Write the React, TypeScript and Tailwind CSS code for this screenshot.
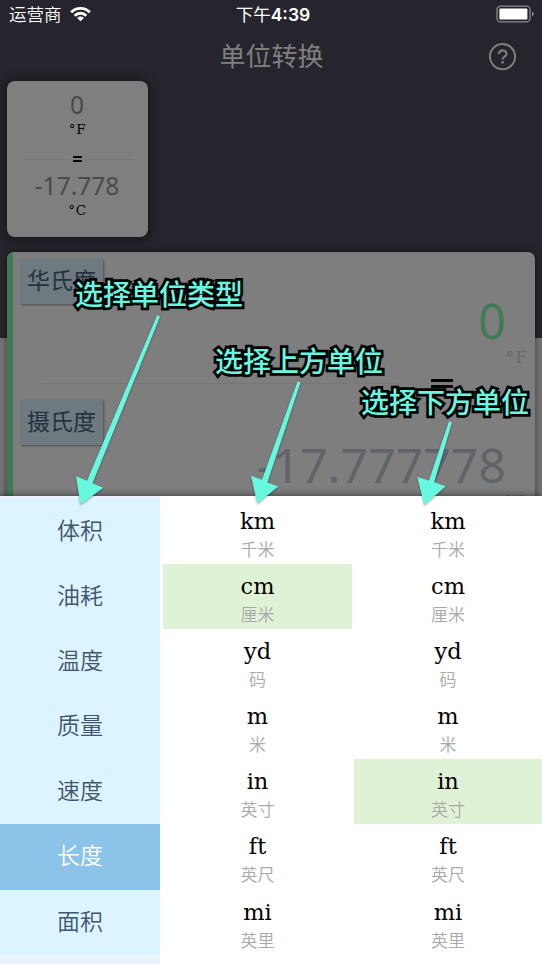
import React from "react";

const CJK = "font-['Noto_Sans_CJK_SC',sans-serif]";
const SLAB = "font-['DejaVu_Serif',serif]";
const DIGITS = "font-['Noto_Sans',sans-serif]";

const categories = ["体积", "油耗", "温度", "质量", "速度", "长度", "面积"];
const units = [
  ["km", "千米"],
  ["cm", "厘米"],
  ["yd", "码"],
  ["m", "米"],
  ["in", "英寸"],
  ["ft", "英尺"],
  ["mi", "英里"],
];

function StatusBar() {
  return (
    <div className="grid h-[30px] grid-cols-[1fr_auto_1fr] items-center pr-[7px] pl-[9px] text-white">
      <div className="flex items-center gap-[8px]">
        <span className={`${CJK} -mt-[2px] text-[17.5px] leading-[28px] font-[350]`}>运营商</span>
        <svg className="-mt-[2px]" width="21" height="16" viewBox="0 0 21 16" fill="none" stroke="white" strokeWidth="2.9">
          <path d="M1.2 6.2a13.2 13.2 0 0 1 18.6 0" />
          <path d="M4.7 9.7a8.2 8.2 0 0 1 11.6 0" />
          <path d="M10.5 15.2 7.2 11.9a4.7 4.7 0 0 1 6.6 0z" fill="white" stroke="none" />
        </svg>
      </div>
      <div className="-mt-[2px] flex items-center pl-[2px] leading-[28px] whitespace-nowrap">
        <span className={`${CJK} text-[17.5px] font-normal`}>下午</span>
        <span className="mt-px font-['Inter',sans-serif] text-[17.5px] font-semibold">4:39</span>
      </div>
      <svg className="-mt-[2px] justify-self-end" width="39" height="18" viewBox="0 0 39 18" fill="none">
        <rect x="1" y="1.2" width="33" height="15.6" rx="3.5" stroke="#8b8a8e" strokeWidth="1.3" />
        <rect x="3.4" y="3.6" width="28" height="11" rx="0.8" fill="white" />
        <path d="M36 6.5c2.3.8 2.3 4.2 0 5z" fill="#8b8a8e" />
      </svg>
    </div>
  );
}

function Header() {
  return (
    <div className="grid h-[51px] grid-cols-[1fr_auto_1fr] items-center pr-[25px] pl-[26px]">
      <span />
      <h1 className={`${CJK} -mt-px text-[26px] leading-[48px] text-[#808080]`}>单位转换</h1>
      <svg className="mt-[2px] justify-self-end" width="28" height="28" viewBox="0 0 28 28" fill="none" stroke="#808080" strokeWidth="2">
        <circle cx="13.5" cy="13.6" r="12.6" />
        <path d="M9.9 11c0-4.9 7.5-4.6 7.5-.1 0 2.8-3.8 2.9-3.8 5.5" strokeWidth="2.1" />
        <circle cx="13.6" cy="19.3" r="1.4" fill="#808080" stroke="none" />
      </svg>
    </div>
  );
}

function SummaryCard() {
  return (
    <div className="ml-[7px] flex h-[156px] w-[141px] flex-col items-center rounded-[8px] bg-[#7f7f7f] pt-[11px] shadow-[0_1px_10px_3px_rgba(0,0,0,0.35)]">
      <div className={`${DIGITS} pr-px text-[24.5px] leading-[26px] text-[#4a4a4a]`}>0</div>
      <div className={`${SLAB} mt-[2px] text-[13.5px] leading-[18px] tracking-[0.8px] text-black`}>°F</div>
      <div className="mt-[12px] flex h-[18px] w-[112px] items-center justify-between">
        <div className="h-px w-[45px] bg-[#777]" />
        <Equals small />
        <div className="h-px w-[45px] bg-[#777]" />
      </div>
      <div className={`${DIGITS} mt-[5px] pr-px text-[24.5px] leading-[26px] text-[#4a4a4a]`}>-17.778</div>
      <div className={`${SLAB} mt-[2px] text-[13.5px] leading-[18px] tracking-[0.8px] text-black`}>°C</div>
    </div>
  );
}

function Equals({ small = false }: { small?: boolean }) {
  return (
    <div className={small ? "flex w-[9px] flex-col gap-[2px]" : "flex w-[22px] flex-col gap-[3px]"}>
      <div className={small ? "h-[2px] bg-black" : "h-[3px] bg-black"} />
      <div className={small ? "h-[2px] bg-black" : "h-[3px] bg-black"} />
    </div>
  );
}

function UnitTag({ label }: { label: string }) {
  return (
    <div className={`${CJK} flex h-[45px] w-[83px] justify-center bg-[#6f7a80] text-[23px] leading-[41px] text-[#24313f] shadow-[1px_1px_2px_rgba(0,0,0,0.4)]`}>
      {label}
    </div>
  );
}

function Converter() {
  return (
    <div className="mx-[7px] mt-[15px] flex h-[260px] overflow-hidden rounded-t-[7px] bg-[#7e7e7e] shadow-[0_0_7px_rgba(0,0,0,0.5)]">
      <div className="w-[6px] bg-[#3f7c55]" />
      <div className="flex flex-1 flex-col">
        <div className="flex h-[119px] justify-between pt-[7px] pl-[7px]">
          <UnitTag label="华氏度" />
          <div className="flex flex-col items-end">
            <div className={`${DIGITS} mt-[34px] pr-[29px] text-[48.5px] leading-[54px] text-[#3f7c55]`}>0</div>
            <div className={`${SLAB} mt-px pr-[7px] text-[17px] leading-[18px] tracking-[1px] text-[#66686d]`}>°F</div>
          </div>
        </div>
        <div className="mt-px flex h-[22px] items-center pl-[29px]">
          <div className="h-px w-[357px] bg-[#777]" />
          <div className="ml-[32px]">
            <Equals />
          </div>
        </div>
        <div className="flex flex-1 justify-between pt-[6px] pl-[7px]">
          <UnitTag label="摄氏度" />
          <div className="flex flex-col items-end">
            <div className={`${DIGITS} mt-[37px] pr-[29px] text-[48.2px] leading-[54px] text-[#60646a]`}>-17.777778</div>
            <div className={`${SLAB} mt-px pr-[7px] text-[17px] leading-[18px] tracking-[1px] text-[#66686d]`}>°C</div>
          </div>
        </div>
      </div>
    </div>
  );
}

function UnitColumn({ selected }: { selected: number }) {
  return (
    <div>
      {units.map(([symbol, name], i) => (
        <div
          key={symbol}
          className={`flex h-[65.1px] flex-col items-center pt-[9px] ${i === selected ? "bg-[#e0f2d5]" : ""}`}
        >
          <div className={`${SLAB} text-[22.5px] leading-[26px] text-black`}>{symbol}</div>
          <div className={`${CJK} mt-[4px] text-[17px] leading-[22px] font-[350] text-[#a9a9a9]`}>{name}</div>
        </div>
      ))}
    </div>
  );
}

function Picker() {
  return (
    <div className="flex h-[468px] bg-white">
      <div className="w-[160px] bg-[#e8f3fd] pt-[3px]">
        {categories.map((c, i) => (
          <div
            key={c}
            className={`${CJK} h-[65.1px] text-center text-[23px] leading-[61px] font-[350] ${
              i === 5 ? "bg-[#8cc3e9] text-white" : "bg-[#dcf4ff] text-[#40556f]"
            }`}
          >
            {c}
          </div>
        ))}
      </div>
      <div className="ml-[3px] w-[189px] pt-[3px]">
        <UnitColumn selected={1} />
      </div>
      <div className="ml-[2px] w-[188px] pt-[3px]">
        <UnitColumn selected={4} />
      </div>
    </div>
  );
}

function Note({ text, place }: { text: string; place: string }) {
  return (
    <div
      className={`${CJK} absolute ${place} text-[28px] leading-[40px] font-medium whitespace-nowrap text-[#67f8e0] [paint-order:stroke_fill] [-webkit-text-stroke:5.5px_black]`}
    >
      {text}
    </div>
  );
}

export default function App() {
  return (
    <div className="relative h-[964px] w-[542px] overflow-hidden">
      <div className="h-[496px] overflow-hidden bg-[linear-gradient(#26242c_338px,#747474_338px)]">
        <StatusBar />
        <Header />
        <SummaryCard />
        <Converter />
      </div>
      <div className="relative shadow-[0_0_7px_rgba(0,0,0,0.6)]">
        <Picker />
      </div>
      <svg className="absolute inset-0 drop-shadow-[0_1px_1px_rgba(0,0,0,0.35)]" width="542" height="964" fill="#67f8e0">
        <path d="M157.2 315.3l2.9 1.2L92.5 483.2l10.7 4.5L80.5 504.5 76 476.2l11 4.5z" />
        <path d="M297.5 381.5l3 1L267.3 482.5l11 4L257.3 503.5 251 475.8l11 4z" />
        <path d="M449 421.3l3 1L434.2 482.2l11.6 4L424.3 505 417.3 477l11.7 3.6z" />
      </svg>
      <Note text="选择单位类型" place="left-[75px] top-[273px]" />
      <Note text="选择上方单位" place="left-[215px] top-[340px]" />
      <Note text="选择下方单位" place="left-[361px] top-[381px]" />
    </div>
  );
}
